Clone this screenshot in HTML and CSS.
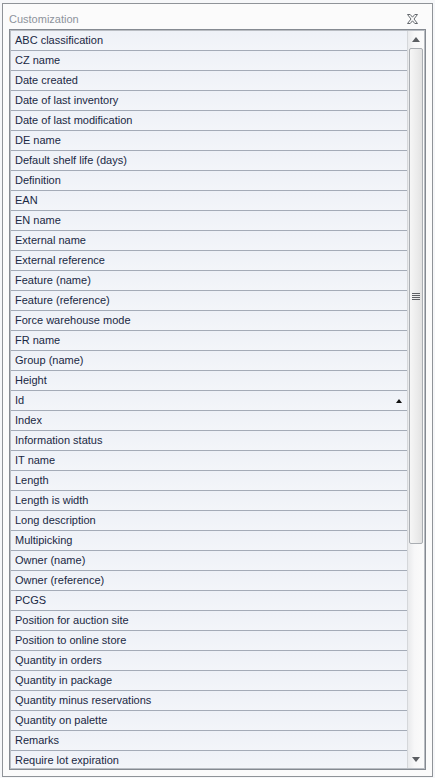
FILE: index.html
```html
<!DOCTYPE html>
<html>
<head>
<meta charset="utf-8">
<link rel="stylesheet" href="styles.css">
</head>
<body>
<div class="dialog">
  <div class="header">
    <span class="title">Customization</span>
    <svg class="close" width="11" height="10" viewBox="0 0 11 10">
      <path d="M0.5 0.5 H3.2 L5.5 3.2 L7.8 0.5 H10.5 L7 5 L10.5 9.5 H7.8 L5.5 6.8 L3.2 9.5 H0.5 L4 5 Z" fill="#fdfdfd" stroke="#65696e" stroke-width="1" stroke-linejoin="round"/>
    </svg>
  </div>
  <div class="list">
    <div class="rows">
      <div class="row">ABC classification</div>
      <div class="row">CZ name</div>
      <div class="row">Date created</div>
      <div class="row">Date of last inventory</div>
      <div class="row">Date of last modification</div>
      <div class="row">DE name</div>
      <div class="row">Default shelf life (days)</div>
      <div class="row">Definition</div>
      <div class="row">EAN</div>
      <div class="row">EN name</div>
      <div class="row">External name</div>
      <div class="row">External reference</div>
      <div class="row">Feature (name)</div>
      <div class="row">Feature (reference)</div>
      <div class="row">Force warehouse mode</div>
      <div class="row">FR name</div>
      <div class="row">Group (name)</div>
      <div class="row">Height</div>
      <div class="row sorted"><span>Id</span><span class="sort-up"></span></div>
      <div class="row">Index</div>
      <div class="row">Information status</div>
      <div class="row">IT name</div>
      <div class="row">Length</div>
      <div class="row">Length is width</div>
      <div class="row">Long description</div>
      <div class="row">Multipicking</div>
      <div class="row">Owner (name)</div>
      <div class="row">Owner (reference)</div>
      <div class="row">PCGS</div>
      <div class="row">Position for auction site</div>
      <div class="row">Position to online store</div>
      <div class="row">Quantity in orders</div>
      <div class="row">Quantity in package</div>
      <div class="row">Quantity minus reservations</div>
      <div class="row">Quantity on palette</div>
      <div class="row">Remarks</div>
      <div class="row">Require lot expiration</div>
    </div>
    <div class="scrollbar">
      <div class="sb-btn"><span class="arrow-up"></span></div>
      <div class="thumb"><span class="grip"></span></div>
      <div class="track"></div>
      <div class="sb-btn"><span class="arrow-down"></span></div>
    </div>
  </div>
</div>
</body>
</html>
```
FILE: styles.css
```css
html, body {
  margin: 0;
  padding: 0;
}
body {
  width: 435px;
  height: 778px;
  background: #f6f7f9;
  overflow: hidden;
  font-family: "Liberation Sans", Arial, sans-serif;
  font-size: 11px;
}
.dialog {
  box-sizing: border-box;
  margin: 3px 0 0 2px;
  width: 431px;
  height: 774px;
  border: 1px solid #8f9398;
  background: #fbfbfb;
  display: flex;
  flex-direction: column;
}
.header {
  box-sizing: border-box;
  height: 25px;
  padding: 9px 14px 3px 6px;
  display: flex;
  justify-content: space-between;
  align-items: flex-start;
}
.title {
  color: #8d939b;
  line-height: 13px;
}
.close {
  display: block;
  margin-top: 1px;
}
.list {
  box-sizing: border-box;
  margin: 0 6px;
  height: 741px;
  border: 1px solid #858a91;
  box-shadow: inset 0 0 0 1px #b9bdc3;
  padding: 1px;
  display: flex;
  overflow: hidden;
}
.rows {
  flex: 1;
  overflow: hidden;
}
.row {
  box-sizing: border-box;
  height: 20px;
  line-height: 19px;
  padding: 0 5px 0 4px;
  border-bottom: 1px solid #a4abb7;
  background: linear-gradient(#eef1f7, #f3f5f9);
  color: #1a2843;
  white-space: nowrap;
}
.sorted {
  display: flex;
  justify-content: space-between;
  align-items: center;
}
.sort-up {
  width: 0;
  height: 0;
  border-left: 3.5px solid transparent;
  border-right: 3.5px solid transparent;
  border-bottom: 4px solid #111;
}
.scrollbar {
  width: 16px;
  display: flex;
  flex-direction: column;
  background: linear-gradient(to right, #e9eaec, #f7f7f8 40%, #fbfbfb);
  border-left: 1px solid #d5d7da;
}
.sb-btn {
  height: 17px;
  flex: none;
  display: flex;
  align-items: center;
  justify-content: center;
}
.arrow-up {
  width: 0;
  height: 0;
  border-left: 4px solid transparent;
  border-right: 4px solid transparent;
  border-bottom: 5px solid #5b5e62;
}
.arrow-down {
  width: 0;
  height: 0;
  border-left: 4px solid transparent;
  border-right: 4px solid transparent;
  border-top: 5px solid #5b5e62;
}
.thumb {
  box-sizing: border-box;
  flex: none;
  height: 496px;
  margin: 0 1px;
  border: 1px solid #a9adb2;
  border-radius: 2px;
  background: linear-gradient(to right, #f6f6f6, #ebebeb 60%, #e2e2e2);
  display: flex;
  align-items: center;
  justify-content: center;
}
.grip {
  display: block;
  width: 8px;
  height: 7px;
  background: repeating-linear-gradient(#5e6064 0, #5e6064 1px, transparent 1px, transparent 2px);
}
.track {
  flex: 1;
}
```
